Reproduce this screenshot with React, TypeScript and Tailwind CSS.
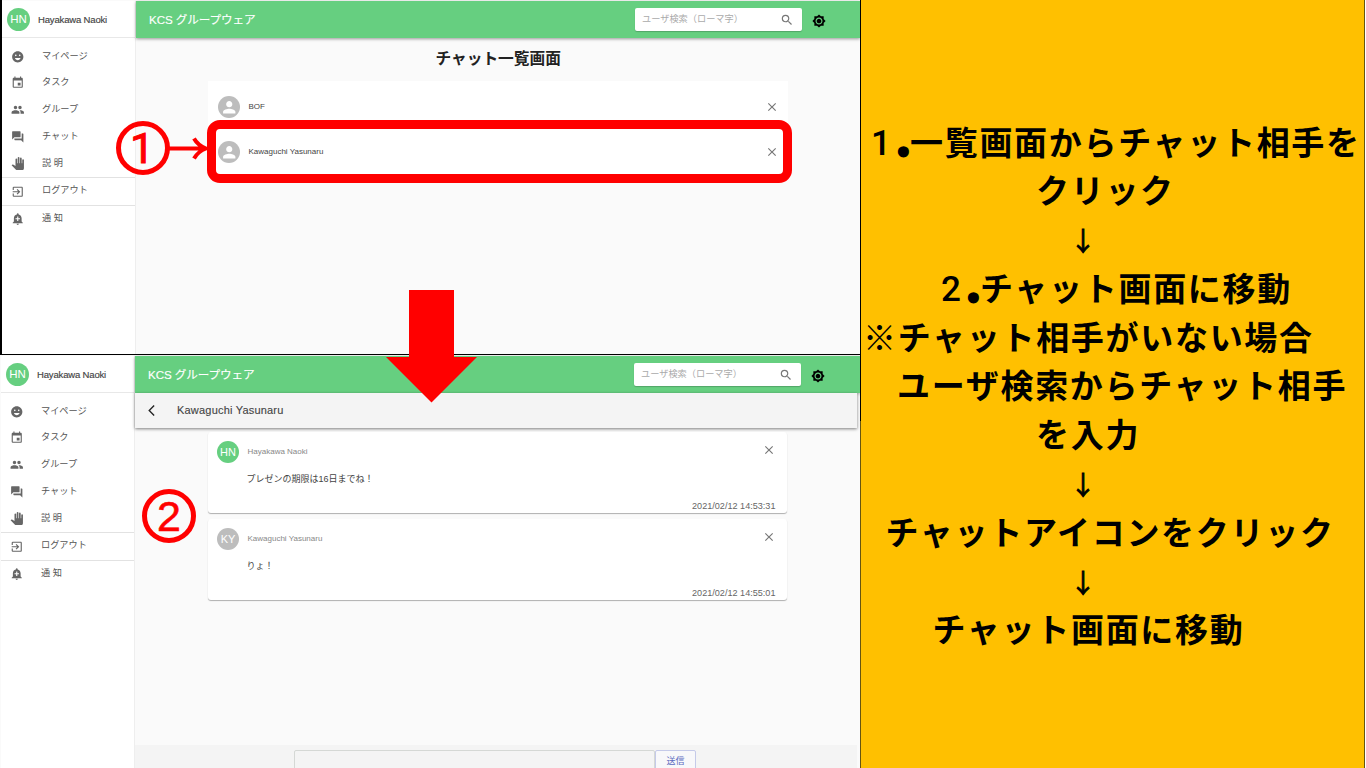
import React from "react";
import {
  MdEmojiEmotions, MdEvent, MdGroup, MdForum, MdPanTool, MdExitToApp, MdAddAlert,
  MdSearch, MdClose, MdPerson, MdArrowBackIosNew, MdBrightnessHigh,
} from "react-icons/md";

const menu = [
  { icon: MdEmojiEmotions, label: "マイページ" },
  { icon: MdEvent, label: "タスク" },
  { icon: MdGroup, label: "グループ" },
  { icon: MdForum, label: "チャット" },
  { icon: MdPanTool, label: "説 明" },
];

function MenuRow({ icon: Icon, label }: { icon: React.ElementType; label: string }) {
  return (
    <li className="flex h-[26.8px] items-center pl-[9px] text-[9.2px] text-[#555]">
      <Icon className="size-[13.5px] text-[#666]" />
      <span className="ml-[17.500px] whitespace-pre">{label}</span>
    </li>
  );
}

function Sidebar() {
  return (
    <aside className="w-[134px] shrink-0 border-r border-[#eee] bg-white">
      <div className="flex h-[37px] items-center border-b border-[#e8e8e8] pl-[5px]">
        <span className="flex size-[23px] items-center justify-center rounded-full bg-[#66cf80] pt-px text-[11.500px] text-white">HN</span>
        <span className="mt-[2px] ml-[8px] text-[9.500px] tracking-[-0.16px] text-[#444] [-webkit-text-stroke:0.15px_#444]">Hayakawa Naoki</span>
      </div>
      <ul className="pt-[5px]">
        {menu.map((m) => <MenuRow key={m.label} {...m} />)}
      </ul>
      <ul className="border-y border-[#e2e2e2]">
        <MenuRow icon={MdExitToApp} label="ログアウト" />
      </ul>
      <ul>
        <MenuRow icon={MdAddAlert} label="通 知" />
      </ul>
    </aside>
  );
}

function Header() {
  return (
    <header className="flex h-[37px] shrink-0 items-center bg-[#66cf80] pl-[13px] shadow-[0_1px_3px_rgba(0,0,0,0.4)]">
      <h1 className="w-[486px] text-[11.600px] tracking-[-0.1px] text-white [-webkit-text-stroke:0.15px_white]">KCS グループウェア</h1>
      <div className="flex h-[23px] w-[167px] items-center justify-between rounded-[2px] bg-white pr-[8px] pl-[7px] shadow-[0_1px_1px_rgba(0,0,0,0.2)]">
        <span className="text-[9.200px] text-[#aaa]">ユーザ検索（ローマ字）</span>
        <MdSearch className="size-[14px] text-[#777]" />
      </div>
      <MdBrightnessHigh className="mt-[3px] ml-[10px] size-[14px] text-black" />
    </header>
  );
}

function ChatRow({ name }: { name: string }) {
  return (
    <div className="flex h-[45px] items-center pt-[7.500px] pr-[9px] pl-[10px]">
      <span className="flex size-[22px] items-center justify-center rounded-full bg-[#bdbdbd]">
        <MdPerson className="size-[18.500px] text-white" />
      </span>
      <span className="ml-[8.500px] flex-1 text-[8px] text-[#444]">{name}</span>
      <MdClose className="size-[14px] text-[#777]" />
    </div>
  );
}

function Message(p: { initials: string; color: string; name: string; text: string; time: string }) {
  return (
    <article className="flex h-[81px] flex-col rounded-[3px] bg-white shadow-[0_1px_1px_0px_rgba(0,0,0,0.3)]">
      <div className="flex items-center pt-[9px] pr-[11px] pl-[9px]">
        <span className={`flex size-[22px] items-center justify-center rounded-full text-[11px] text-white ${p.color}`}>{p.initials}</span>
        <span className="ml-[8.500px] flex-1 text-[8px] text-[#888]">{p.name}</span>
        <MdClose className="mb-[4px] size-[14px] text-[#777]" />
      </div>
      <p className="mt-[9px] pl-[38.500px] text-[9px] leading-[14px] text-[#444]">{p.text}</p>
      <time className="mt-auto pr-[11.500px] text-right text-[9.100px] leading-[14px] text-[#666]">{p.time}</time>
    </article>
  );
}

function ListScreen() {
  return (
    <section className="flex h-[355px] border-b border-l-2 border-black bg-[#fafafa] pt-px">
      <Sidebar />
      <main className="flex-1">
        <Header />
        <h2 className="ml-[299.500px] pt-[10px] text-[15.700px] leading-[22px] font-bold text-[#222]">チャット一覧画面</h2>
        <div className="mt-[11px] ml-[72px] w-[580px] bg-white pb-[6px]">
          <ChatRow name="BOF" />
          <ChatRow name="Kawaguchi Yasunaru" />
        </div>
      </main>
    </section>
  );
}

function ChatScreen() {
  return (
    <section className="flex h-[413px] bg-[#fafafa] pt-px pl-px">
      <Sidebar />
      <main className="flex flex-1 flex-col">
        <Header />
        <div className="mr-[3px] flex h-[35px] items-center bg-[#f4f4f4] pl-[10px] shadow-[0_1px_3px_rgba(0,0,0,0.5)]">
          <MdArrowBackIosNew className="size-[13px] text-[#222]" />
          <span className="ml-[19px] text-[11px] tracking-[0.2px] text-[#444] [-webkit-text-stroke:0.12px_#444]">Kawaguchi Yasunaru</span>
        </div>
        <div className="mt-[4px] ml-[73px] flex w-[579px] flex-col gap-[6px]">
          <Message initials="HN" color="bg-[#66cf80]" name="Hayakawa Naoki" text="プレゼンの期限は16日までね！" time="2021/02/12 14:53:31" />
          <Message initials="KY" color="bg-[#bdbdbd]" name="Kawaguchi Yasunaru" text="りょ！" time="2021/02/12 14:55:01" />
        </div>
        <div className="mt-auto mr-[3px] flex h-[23px] overflow-hidden bg-[#f4f4f4] pt-[5px] pl-[159px]">
          <div className="h-[30px] w-[361px] rounded-[2px] border border-[#d5d8d5]" />
          <button className="flex h-[24px] w-[41px] items-center justify-center rounded-[2px] border border-[#c5cae9] bg-[#f8f8fa] text-[9px] text-[#5c6bc0]">送信</button>
        </div>
      </main>
    </section>
  );
}

const line = "h-[48.8px] whitespace-nowrap";

function Numbered({ digit }: { digit: string }) {
  return (
    <>
      <span className="inline-block w-[36px] text-center font-[Roboto,sans-serif] text-[35px] leading-[40px] font-medium tracking-normal">{digit}</span>
      <span className="inline-block w-[11px] tracking-normal"><span className="-ml-px [-webkit-text-stroke:5px_black]">.</span></span>
    </>
  );
}

function Down() {
  return <p className="h-[48.8px] w-[444px] pt-[2px] text-center text-[26px] font-normal tracking-normal [-webkit-text-stroke:0.8px_black]">↓</p>;
}

function Notes() {
  return (
    <aside className="h-[768px] w-[505px] border-x border-[#665511] bg-[#ffc000] pt-[116.500px] font-['Noto_Sans_CJK_JP',sans-serif] text-[33px] leading-[48.8px] font-bold tracking-[1.7px] text-black">
      <p className={`${line} pl-[2px]`}><Numbered digit="1" />一覧画面からチャット相手を</p>
      <p className={`${line} pl-[175px]`}>クリック</p>
      <Down />
      <p className={`${line} pl-[72px]`}><Numbered digit="2" />チャット画面に移動</p>
      <p className={`${line} pl-[2px]`}>※チャット相手がいない場合</p>
      <p className={`${line} pl-[36px]`}>ユーザ検索からチャット相手</p>
      <p className={`${line} pl-[175px]`}>を入力</p>
      <Down />
      <p className={`${line} pl-[24.500px]`}>チャットアイコンをクリック</p>
      <Down />
      <p className={`${line} pl-[71.500px]`}>チャット画面に移動</p>
    </aside>
  );
}

export default function App() {
  return (
    <div className="relative flex h-[768px] w-[1366px] overflow-hidden bg-white font-['Liberation_Sans','Noto_Sans_CJK_JP',sans-serif]">
      <div className="w-[860px] shrink-0">
        <ListScreen />
        <ChatScreen />
      </div>
      <Notes />
      <div className="absolute top-0 left-[860px] h-[421px] w-px bg-black" />
      <div className="absolute top-[120px] left-[207.400px] h-[63px] w-[585px] rounded-[13px] border-[9px] border-[#ff0000]" />
      <div className="absolute top-[121px] left-[116px] flex size-[54px] items-center justify-center rounded-full border-[5px] border-[#ff0000] pr-[2px] font-[Roboto,sans-serif] text-[43px] text-[#ff0000] [-webkit-text-stroke:1px_#ff0000]">1</div>
      <svg className="absolute top-[136px] left-[168px]" width="40" height="26" viewBox="0 0 40 26" fill="none" stroke="#ff0000" strokeWidth="4">
        <path d="M1 12.5H36M26 2.5Q30 9.5 38 12.5Q30 15.5 26 22.5" />
      </svg>
      <div className="absolute top-[489px] left-[142px] flex size-[54px] items-center justify-center rounded-full border-[5px] border-[#ff0000] text-[43px] text-[#ff0000] [-webkit-text-stroke:0.6px_#ff0000]">2</div>
      <svg className="absolute top-[290px] left-[386px]" width="91" height="113" viewBox="0 0 91 113">
        <path d="M23 0H68V67H91L45.500 112.500L0 67H23Z" fill="#ff0000" />
      </svg>
    </div>
  );
}
